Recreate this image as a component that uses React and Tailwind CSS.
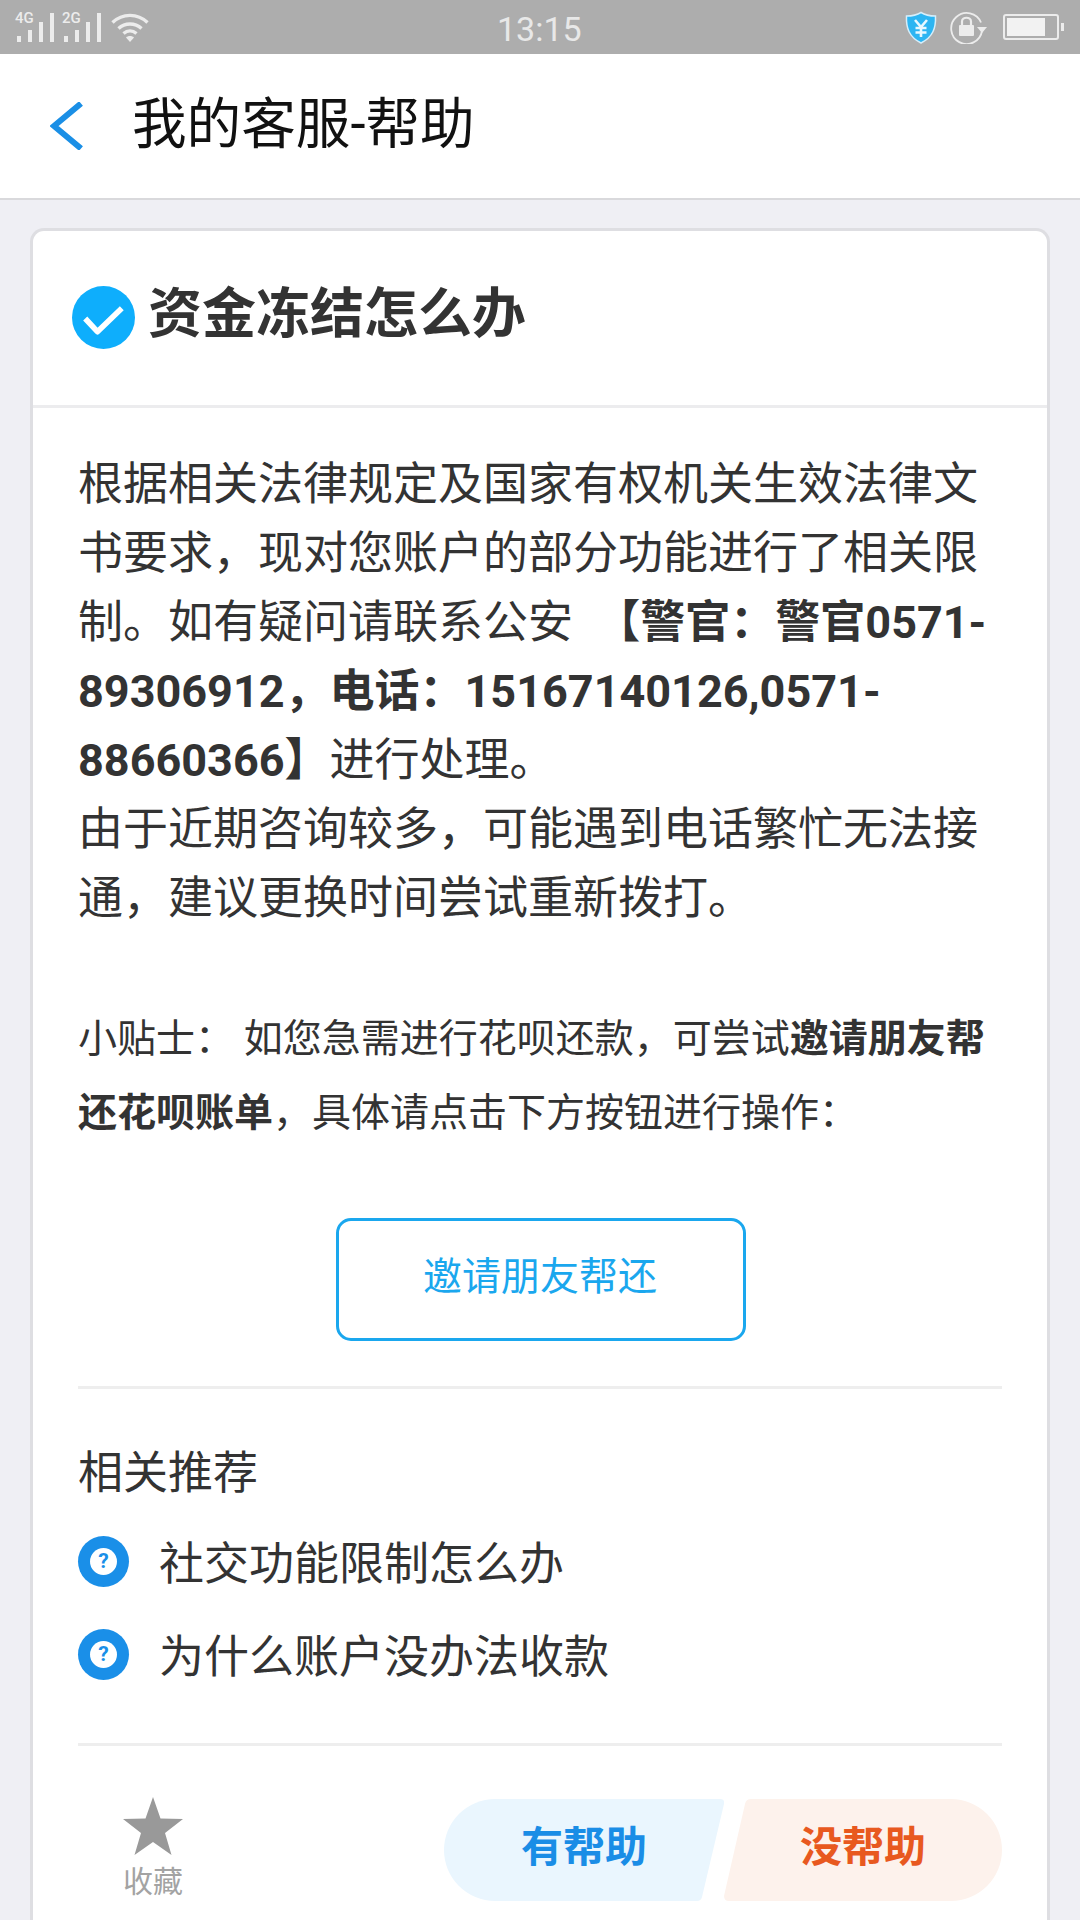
function Signal({ label }) {
  return (
    <div className="relative w-[40px] h-[30px] text-[#ececec]">
      <span className="absolute left-[0px] top-[-3px] text-[15px] leading-[16px] font-medium font-['Roboto',sans-serif]">{label}</span>
      <svg className="absolute left-0 top-0" width="42" height="30" viewBox="0 0 42 30" fill="#ececec">
        <rect x="2" y="23" width="4" height="6" />
        <rect x="13" y="17" width="4" height="12" />
        <rect x="24" y="9" width="4" height="20" />
        <rect x="35" y="0" width="4" height="29" />
      </svg>
    </div>
  );
}

function Wifi() {
  return (
    <svg width="38" height="30" viewBox="0 0 38 30" fill="none" stroke="#ececec" strokeWidth="3.4">
      <path d="M1.5 9.5C11.5 0 26.5 0 36.5 9.5" />
      <path d="M7.5 15.5C14 9.5 24 9.5 30.5 15.5" />
      <path d="M12.5 20.5C16.5 17 21.5 17 25.5 20.5" />
      <path d="M15 24.5L19 29L23 24.5C21 22.5 17 22.5 15 24.5Z" fill="#ececec" stroke="none" />
    </svg>
  );
}

function Shield() {
  return (
    <svg width="32" height="33" viewBox="0 0 32 33">
      <path d="M16 1.5C20 4 25 5 30.5 5C31 17 28 26 16 32C4 26 1 17 1.5 5C7 5 12 4 16 1.5Z" fill="#2db5f2" stroke="#d6eefa" strokeWidth="1.5" />
      <path d="M10 9L16 16L22 9M16 16V26M10.5 17H21.5M10.5 21.5H21.5" fill="none" stroke="#e8f8ff" strokeWidth="2.6" />
    </svg>
  );
}

function LockRotate() {
  return (
    <svg width="38" height="34" viewBox="0 0 38 34" fill="none">
      <path d="M31 12.5A15.5 15.5 0 1 0 32 21" stroke="#ececec" strokeWidth="1.8" />
      <path d="M27 17H37L32 23Z" fill="#ececec" />
      <rect x="9" y="15" width="15" height="11" rx="1" fill="#ececec" />
      <path d="M12 15V11.5C12 6.5 21 6.5 21 11.5V15" stroke="#ececec" strokeWidth="2.2" />
    </svg>
  );
}

function Battery() {
  return (
    <div className="flex items-center">
      <div className="w-[56px] h-[26px] rounded-[3px] border-2 border-[#ececec] p-[2px] flex">
        <div className="w-[38px] bg-[#f2f2f2]" />
      </div>
      <div className="w-[3px] h-[8px] ml-[2px] bg-[#ececec]" />
    </div>
  );
}

function StatusBar() {
  return (
    <div className="relative h-[54px] bg-[#adadad] flex items-center justify-between pl-[15px] pr-[16px]">
      <div className="flex items-center mt-[1px]">
        <Signal label="4G" />
        <div className="w-[7px]" />
        <Signal label="2G" />
        <div className="w-[9px]" />
        <Wifi />
      </div>
      <span className="absolute left-[497px] top-[9px] text-[34px] leading-[40px] text-[#e8e8e8] font-['Roboto',sans-serif]">13:15</span>
      <div className="flex items-center">
        <Shield />
        <div className="w-[13px]" />
        <LockRotate />
        <div className="w-[15px]" />
        <Battery />
      </div>
    </div>
  );
}

function Header() {
  return (
    <div className="h-[146px] bg-white border-b-2 border-[#d9d9dc] flex items-center pl-[50px]">
      <svg width="34" height="48" viewBox="0 0 34 48" fill="none">
        <path d="M31 1.5L4 24L31 46.5" stroke="#1a8fe6" strokeWidth="6" />
      </svg>
      <h1 className="ml-[48px] text-[54.6px] leading-[70px] text-[#111111] font-normal mt-[-4px]">我的客服-帮助</h1>
    </div>
  );
}

function CheckBadge() {
  return (
    <svg width="63" height="63" viewBox="0 0 62 62" className="mt-[-2px] ml-[1px]">
      <circle cx="31" cy="31" r="31" fill="#0eaefc" />
      <path d="M13 32L25 45L49 22" fill="none" stroke="#ffffff" strokeWidth="5.5" strokeLinejoin="round" />
    </svg>
  );
}

function QuestionBadge() {
  return (
    <div className="w-[51px] h-[51px] rounded-full bg-[#1a8fe8] flex items-center justify-center shrink-0">
      <div className="w-[27px] h-[27px] rounded-full bg-white flex items-center justify-center text-[21px] leading-none font-bold text-[#1a8fe8] font-['Roboto',sans-serif]">?</div>
    </div>
  );
}

function Related({ text }) {
  return (
    <div className="h-[93px] flex items-center">
      <QuestionBadge />
      <span className="ml-[30px] mt-[6px] text-[45px] leading-[60px] text-[#333333]">{text}</span>
    </div>
  );
}

function Footer() {
  return (
    <div className="flex h-[175px] pt-[53px]">
      <div className="w-[150px] flex flex-col items-center mt-[-2px]">
        <svg width="62" height="58" viewBox="0 0 62 58" fill="#999999">
          <path d="M31 0L38.5 21.5L61 22L43 36L49.5 58L31 45L12.5 58L19 36L1 22L23.5 21.5Z" />
        </svg>
        <span className="mt-[9px] text-[30px] leading-[36px] text-[#a3a3a3]">收藏</span>
      </div>
      <div className="w-[216px]" />
      <div className="w-[280px] h-[102px] pb-[4px] bg-[#eaf6fe] [clip-path:path('M51_0H276Q281_0_280_5L258_98Q257_102_253_102H51A51_51_0_0_1_51_0Z')] flex items-center justify-center">
        <span className="text-[42px] leading-[50px] font-bold text-[#1a8de6]">有帮助</span>
      </div>
      <div className="w-[278px] h-[102px] pb-[4px] bg-[#fdf2ec] [clip-path:path('M27_0H227A51_51_0_0_1_227_102H5Q0_102_0_97L21_5Q22_0_27_0Z')] flex items-center justify-center">
        <span className="text-[42px] leading-[50px] font-bold text-[#e8591f]">没帮助</span>
      </div>
    </div>
  );
}

export default function App() {
  return (
    <div className="w-[1080px] h-[1920px] overflow-hidden bg-[#efeff4] font-['Roboto','Noto_Sans_CJK_SC',sans-serif]">
      <StatusBar />
      <Header />
      <main className="px-[30px] pt-[28px]">
        <div className="bg-white rounded-t-[14px] border-x-[3px] border-t-[3px] border-[#dedee2] h-[1700px]">
          <div className="h-[177px] border-b-[3px] border-[#ececee] flex items-center pl-[38px]">
            <CheckBadge />
            <h2 className="ml-[13px] mt-[-6px] text-[54px] leading-[70px] font-bold text-[#333333]">资金冻结怎么办</h2>
          </div>
          <div className="px-[45px] pt-[42px]">
            <p className="w-[950px] text-[45px] leading-[69px] text-[#333333]">
              根据相关法律规定及国家有权机关生效法律文<br />
              书要求，现对您账户的部分功能进行了相关限<br />
              制。如有疑问请联系公安 &nbsp;<b>【警官：警官0571-<br />89306912，电话：15167140126,0571-<br />88660366】</b>进行处理。<br />
              由于近期咨询较多，可能遇到电话繁忙无法接<br />
              通，建议更换时间尝试重新拨打。
            </p>
            <p className="mt-[69px] w-[950px] text-[39px] leading-[74px] text-[#333333]">
              小贴士： 如您急需进行花呗还款，可尝试<b>邀请朋友帮<br />还花呗账单</b>，具体请点击下方按钮进行操作：
            </p>
            <div className="mt-[68px] flex justify-center">
              <button className="w-[410px] h-[123px] ml-[2px] pr-[2px] rounded-[15px] border-[3px] border-[#1aa7ee] text-[39px] leading-[50px] text-[#1aa7ee] pb-[6px]">邀请朋友帮还</button>
            </div>
            <div className="mt-[45px] h-[3px] bg-[#eeeeee]" />
            <div className="mt-[55px] text-[45px] leading-[60px] text-[#333333]">相关推荐</div>
            <div className="mt-[11px]">
              <Related text="社交功能限制怎么办" />
              <Related text="为什么账户没办法收款" />
            </div>
            <div className="mt-[42px] h-[3px] bg-[#eeeeee]" />
            <Footer />
          </div>
        </div>
      </main>
    </div>
  );
}
